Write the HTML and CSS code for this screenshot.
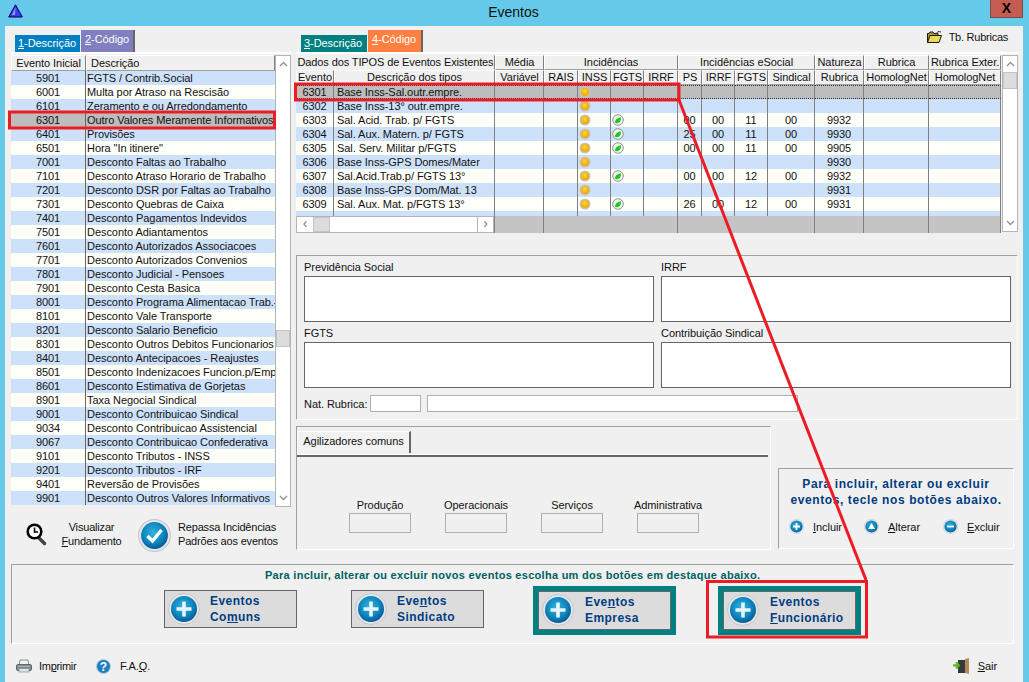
FILE: index.html
```html
<!DOCTYPE html>
<html lang="pt">
<head>
<meta charset="utf-8">
<title>Eventos</title>
<link rel="stylesheet" href="styles.css">
</head>
<body>
<svg class="defs" width="0" height="0" aria-hidden="true">
  <defs>
    <radialGradient id="gBlue" cx="45%" cy="40%" r="65%">
      <stop offset="0" stop-color="#35b4dc"/><stop offset=".6" stop-color="#0d86bf"/><stop offset="1" stop-color="#07518e"/>
    </radialGradient>
    <radialGradient id="gGold" cx="45%" cy="40%" r="60%">
      <stop offset="0" stop-color="#ffd83a"/><stop offset="1" stop-color="#eea400"/>
    </radialGradient>
    <symbol id="orb" viewBox="0 0 32 32">
      <circle cx="16" cy="16" r="15.5" fill="#e4e6e8" stroke="#c4c8cc"/>
      <circle cx="16" cy="16" r="13" fill="url(#gBlue)"/>
    </symbol>
    <symbol id="gold" viewBox="0 0 12 12">
      <circle cx="6" cy="6" r="5.5" fill="#c6c2b4"/>
      <circle cx="6" cy="6" r="4" fill="url(#gGold)"/>
    </symbol>
    <symbol id="green" viewBox="0 0 12 12">
      <circle cx="6" cy="6" r="5.3" fill="#f2f4f0" stroke="#8e968e"/>
      <path d="M2.800 8.500Q3.500 4 8.800 3.200 9.500 7.500 6 9 4 9.500 2.800 8.500z" fill="#1ec61e"/>
    </symbol>
    <symbol id="up" viewBox="0 0 9 6"><path d="M1 5l3.500-3.500L8 5" fill="none" stroke="#909090" stroke-width="1.300"/></symbol>
    <symbol id="down" viewBox="0 0 9 6"><path d="M1 1l3.500 3.500L8 1" fill="none" stroke="#909090" stroke-width="1.300"/></symbol>
  </defs>
</svg>

<header class="titlebar">
  <svg class="logo" width="15" height="14" viewBox="0 0 15 14"><path d="M7.500 .8L14.300 13H.7z" fill="#3a3ae8" stroke="#000048"/><path d="M7.500 3L4 11h3z" fill="#8a9cff"/></svg>
  <h1 class="title">Eventos</h1>
  <button class="close" type="button">X</button>
</header>

<div class="client">
  <div class="main">
    <section class="left">
      <div class="tabs tabs-left">
        <span class="tab tab-blue"><u>1</u>-Descrição</span>
        <span class="tab tab-purple active"><u>2</u>-Código</span>
      </div>
      <div class="strip"></div>
      <div class="list">
        <table class="grid list-table">
          <colgroup><col class="w-75"><col class="w-189"></colgroup>
          <thead><tr><th>Evento Inicial</th><th class="tl">Descrição</th></tr></thead>
          <tbody>
            <tr><td class="c">5901</td><td>FGTS / Contrib.Social</td></tr>
            <tr><td class="c">6001</td><td>Multa por Atraso na Rescisão</td></tr>
            <tr><td class="c">6101</td><td>Zeramento e ou Arredondamento</td></tr>
            <tr class="sel"><td class="c">6301</td><td>Outro Valores Meramente Informativos</td></tr>
            <tr><td class="c">6401</td><td>Provisões</td></tr>
            <tr><td class="c">6501</td><td>Hora "In itinere"</td></tr>
            <tr><td class="c">7001</td><td>Desconto Faltas ao Trabalho</td></tr>
            <tr><td class="c">7101</td><td>Desconto Atraso Horario de Trabalho</td></tr>
            <tr><td class="c">7201</td><td>Desconto DSR por Faltas ao Trabalho</td></tr>
            <tr><td class="c">7301</td><td>Desconto Quebras de Caixa</td></tr>
            <tr><td class="c">7401</td><td>Desconto Pagamentos Indevidos</td></tr>
            <tr><td class="c">7501</td><td>Desconto Adiantamentos</td></tr>
            <tr><td class="c">7601</td><td>Desconto Autorizados Associacoes</td></tr>
            <tr><td class="c">7701</td><td>Desconto Autorizados Convenios</td></tr>
            <tr><td class="c">7801</td><td>Desconto Judicial - Pensoes</td></tr>
            <tr><td class="c">7901</td><td>Desconto Cesta Basica</td></tr>
            <tr><td class="c">8001</td><td>Desconto Programa Alimentacao Trab.-</td></tr>
            <tr><td class="c">8101</td><td>Desconto Vale Transporte</td></tr>
            <tr><td class="c">8201</td><td>Desconto Salario Beneficio</td></tr>
            <tr><td class="c">8301</td><td>Desconto Outros Debitos Funcionarios</td></tr>
            <tr><td class="c">8401</td><td>Desconto Antecipacoes - Reajustes</td></tr>
            <tr><td class="c">8501</td><td>Desconto Indenizacoes Funcion.p/Empr</td></tr>
            <tr><td class="c">8601</td><td>Desconto Estimativa de Gorjetas</td></tr>
            <tr><td class="c">8901</td><td>Taxa Negocial Sindical</td></tr>
            <tr><td class="c">9001</td><td>Desconto Contribuicao Sindical</td></tr>
            <tr><td class="c">9034</td><td>Desconto Contribuicao Assistencial</td></tr>
            <tr><td class="c">9067</td><td>Desconto Contribuicao Confederativa</td></tr>
            <tr><td class="c">9101</td><td>Desconto Tributos - INSS</td></tr>
            <tr><td class="c">9201</td><td>Desconto Tributos - IRF</td></tr>
            <tr><td class="c">9401</td><td>Reversão de Provisões</td></tr>
            <tr><td class="c">9901</td><td>Desconto Outros Valores Informativos</td></tr>
          </tbody>
        </table>
        <div class="vscroll vscroll-left">
          <span class="sbtn"><svg width="9" height="6"><use href="#up"/></svg></span>
          <span class="thumb thumb-left"></span>
          <span class="sbtn sbtn-end"><svg width="9" height="6"><use href="#down"/></svg></span>
        </div>
      </div>
      <div class="tools">
        <svg class="lens" width="21" height="23" viewBox="0 0 21 23">
          <path d="M12.500 14.500l6 6" stroke="#444" stroke-width="3.500" stroke-linecap="round"/>
          <circle cx="8.500" cy="8.500" r="6.800" fill="#fff" stroke="#000" stroke-width="2.600"/>
          <path d="M8.500 4.500v4.500h3.500" fill="none" stroke="#000" stroke-width="1.600"/>
        </svg>
        <div class="tool-text tool-view">Visualizar<br><u>F</u>undamento</div>
        <svg class="orb-big" width="33" height="33"><use href="#orb"/><path d="M9.500 17l5 5 9-11" fill="none" stroke="#fff" stroke-width="3.400"/></svg>
        <div class="tool-text">Repassa Incidências<br>Padrões aos eventos</div>
      </div>
    </section>

    <section class="right">
      <div class="right-head">
        <div class="tabs">
          <span class="tab tab-teal"><u>3</u>-Descrição</span>
          <span class="tab tab-orange active"><u>4</u>-Código</span>
        </div>
        <div class="rubricas">
          <svg width="15" height="12" viewBox="0 0 15 12"><path d="M.5 11.500V2.500h1.500l1-1.500h3l1 1.500h4v2" fill="#a89838" stroke="#1a1a00"/><path d="M.5 11.500L3 4.500h11.500l-2.500 7z" fill="#e8d860" stroke="#1a1a00"/><path d="M9 3l2-2.500 3 .5" fill="none" stroke="#333"/></svg>
          <span>Tb. Rubricas</span>
        </div>
      </div>
      <div class="strip"></div>
      <div class="types">
        <table class="grid types-table">
          <colgroup>
            <col class="w-38"><col class="w-161"><col class="w-49"><col class="w-34"><col class="w-33"><col class="w-33"><col class="w-34"><col class="w-24"><col class="w-33"><col class="w-33"><col class="w-47"><col class="w-49"><col class="w-65"><col class="w-72">
          </colgroup>
          <thead>
            <tr>
              <th colspan="2" class="flat">Dados dos TIPOS de Eventos Existentes</th>
              <th>Média</th>
              <th colspan="4">Incidências</th>
              <th colspan="4">Incidências eSocial</th>
              <th>Natureza</th>
              <th>Rubrica</th>
              <th>Rubrica Exter.</th>
            </tr>
            <tr>
              <th>Evento</th><th>Descrição dos tipos</th><th>Variável</th>
              <th>RAIS</th><th>INSS</th><th>FGTS</th><th>IRRF</th>
              <th>PS</th><th>IRRF</th><th>FGTS</th><th>Sindical</th>
              <th>Rubrica</th><th>HomologNet</th><th>HomologNet</th>
            </tr>
          </thead>
          <tbody>
            <tr class="sel dotted"><td class="c">6301</td><td>Base Inss-Sal.outr.empre.</td><td></td><td></td><td class="dot"><svg width="12" height="12"><use href="#gold"/></svg></td><td></td><td></td><td></td><td></td><td></td><td></td><td></td><td></td><td></td></tr>
            <tr><td class="c">6302</td><td>Base Inss-13° outr.empre.</td><td></td><td></td><td class="dot"><svg width="12" height="12"><use href="#gold"/></svg></td><td></td><td></td><td></td><td></td><td></td><td></td><td></td><td></td><td></td></tr>
            <tr><td class="c">6303</td><td>Sal. Acid. Trab. p/ FGTS</td><td></td><td></td><td class="dot"><svg width="12" height="12"><use href="#gold"/></svg></td><td class="dot"><svg width="12" height="12"><use href="#green"/></svg></td><td></td><td class="c">00</td><td class="c">00</td><td class="c">11</td><td class="c">00</td><td class="c">9932</td><td></td><td></td></tr>
            <tr><td class="c">6304</td><td>Sal. Aux. Matern. p/ FGTS</td><td></td><td></td><td class="dot"><svg width="12" height="12"><use href="#gold"/></svg></td><td class="dot"><svg width="12" height="12"><use href="#green"/></svg></td><td></td><td class="c">25</td><td class="c">00</td><td class="c">11</td><td class="c">00</td><td class="c">9930</td><td></td><td></td></tr>
            <tr><td class="c">6305</td><td>Sal. Serv. Militar p/FGTS</td><td></td><td></td><td class="dot"><svg width="12" height="12"><use href="#gold"/></svg></td><td class="dot"><svg width="12" height="12"><use href="#green"/></svg></td><td></td><td class="c">00</td><td class="c">00</td><td class="c">11</td><td class="c">00</td><td class="c">9905</td><td></td><td></td></tr>
            <tr><td class="c">6306</td><td>Base Inss-GPS Domes/Mater</td><td></td><td></td><td class="dot"><svg width="12" height="12"><use href="#gold"/></svg></td><td></td><td></td><td></td><td></td><td></td><td></td><td class="c">9930</td><td></td><td></td></tr>
            <tr><td class="c">6307</td><td>Sal.Acid.Trab.p/ FGTS 13°</td><td></td><td></td><td class="dot"><svg width="12" height="12"><use href="#gold"/></svg></td><td class="dot"><svg width="12" height="12"><use href="#green"/></svg></td><td></td><td class="c">00</td><td class="c">00</td><td class="c">12</td><td class="c">00</td><td class="c">9932</td><td></td><td></td></tr>
            <tr><td class="c">6308</td><td>Base Inss-GPS Dom/Mat. 13</td><td></td><td></td><td class="dot"><svg width="12" height="12"><use href="#gold"/></svg></td><td></td><td></td><td></td><td></td><td></td><td></td><td class="c">9931</td><td></td><td></td></tr>
            <tr><td class="c">6309</td><td>Sal. Aux. Mat. p/FGTS 13°</td><td></td><td></td><td class="dot"><svg width="12" height="12"><use href="#gold"/></svg></td><td class="dot"><svg width="12" height="12"><use href="#green"/></svg></td><td></td><td class="c">26</td><td class="c">00</td><td class="c">12</td><td class="c">00</td><td class="c">9931</td><td></td><td></td></tr>
            <tr class="partial"><td></td><td></td><td></td><td></td><td></td><td></td><td></td><td></td><td></td><td></td><td></td><td></td><td></td><td></td></tr>
          </tbody>
          <tfoot>
            <tr>
              <td colspan="2" class="hscroll-cell">
                <div class="hscroll">
                  <span class="hbtn">&#8249;</span><span class="hthumb"></span><span class="hfill"></span><span class="hbtn hbtn-end">&#8250;</span>
                </div>
              </td>
              <td></td><td colspan="4"></td><td colspan="4"></td><td></td><td></td><td></td>
            </tr>
          </tfoot>
        </table>
        <div class="vscroll vscroll-right">
          <span class="sbtn"><svg width="9" height="6"><use href="#up"/></svg></span>
          <span class="thumb"></span>
          <span class="sbtn sbtn-end"><svg width="9" height="6"><use href="#down"/></svg></span>
        </div>
      </div>

      <div class="group">
        <div class="fields">
          <div><div class="flabel">Previdência Social</div><div class="fbox"></div></div>
          <div><div class="flabel">IRRF</div><div class="fbox"></div></div>
          <div><div class="flabel">FGTS</div><div class="fbox"></div></div>
          <div><div class="flabel">Contribuição Sindical</div><div class="fbox"></div></div>
        </div>
        <div class="nat">
          <span class="nat-label">Nat. Rubrica:</span>
          <span class="input input-code"></span>
          <span class="input input-desc"></span>
        </div>
      </div>

      <div class="lower">
        <div class="agil">
          <div class="agil-tabs"><span class="agil-tab">Agilizadores comuns</span></div>
          <div class="agil-grid">
            <div class="agil-item"><span class="agil-label">Produção</span><span class="agil-box"></span></div>
            <div class="agil-item"><span class="agil-label">Operacionais</span><span class="agil-box"></span></div>
            <div class="agil-item"><span class="agil-label">Serviços</span><span class="agil-box"></span></div>
            <div class="agil-item"><span class="agil-label">Administrativa</span><span class="agil-box"></span></div>
          </div>
        </div>
        <div class="hint">
          <p class="hint-text">Para incluir, alterar ou excluir<br>eventos, tecle nos botões abaixo.</p>
          <div class="hint-actions">
            <span class="act act-inc"><svg width="15" height="15"><use href="#orb"/><path d="M7.500 4v7M4 7.500h7" stroke="#fff" stroke-width="1.800"/></svg><span><u>I</u>ncluir</span></span>
            <span class="act act-alt"><svg width="15" height="15"><use href="#orb"/><path d="M7.500 4l3.500 6H4z" fill="#fff"/></svg><span><u>A</u>lterar</span></span>
            <span class="act"><svg width="15" height="15"><use href="#orb"/><path d="M4 7.500h7" stroke="#fff" stroke-width="1.800"/></svg><span><u>E</u>xcluir</span></span>
          </div>
        </div>
      </div>
    </section>
  </div>

  <section class="panel">
    <p class="panel-text">Para incluir, alterar ou excluir novos eventos escolha um dos botões em destaque abaixo.</p>
    <div class="ev-row">
      <button class="ev ev-1" type="button"><svg width="32" height="32"><use href="#orb"/><path d="M16 8.500v15M8.500 16h15" stroke="#e8f6fb" stroke-width="3.600"/></svg><span>Eventos<br>Co<u>m</u>uns</span></button>
      <button class="ev ev-2" type="button"><svg width="32" height="32"><use href="#orb"/><path d="M16 8.500v15M8.500 16h15" stroke="#e8f6fb" stroke-width="3.600"/></svg><span>Eve<u>n</u>tos<br>Sindicato</span></button>
      <div class="hl hl-1"><button class="ev" type="button"><svg width="32" height="32"><use href="#orb"/><path d="M16 8.500v15M8.500 16h15" stroke="#e8f6fb" stroke-width="3.600"/></svg><span>Eve<u>n</u>tos<br>Empresa</span></button></div>
      <div class="hl hl-2"><button class="ev" type="button"><svg width="32" height="32"><use href="#orb"/><path d="M16 8.500v15M8.500 16h15" stroke="#e8f6fb" stroke-width="3.600"/></svg><span>Eventos<br><u>F</u>uncionário</span></button></div>
    </div>
  </section>

  <footer class="footer">
    <span class="foot-item foot-print">
      <svg width="16" height="14" viewBox="0 0 16 14"><path d="M4 1h8l1 5H3z" fill="#eef0f0" stroke="#8a9096"/><rect x=".5" y="5.500" width="15" height="6" rx="1.500" fill="#7f8a90" stroke="#5e666c"/><rect x="3" y="9.500" width="10" height="3.500" fill="#dfe3e4" stroke="#7a8288" stroke-width=".6"/><rect x="2" y="6.800" width="12" height="1" fill="#a9b4b8"/></svg>
      <span class="print-label">Im<u>p</u>rimir</span>
    </span>
    <span class="foot-item foot-faq">
      <svg width="15" height="15" viewBox="0 0 15 15"><circle cx="7.500" cy="7.500" r="7" fill="#1d7fc0" stroke="#b7d3e2"/><text class="q" x="7.500" y="11.500" text-anchor="middle">?</text></svg>
      <span>F.A.<u>Q</u>.</span>
    </span>
    <span class="foot-item foot-exit">
      <svg width="17" height="16" viewBox="0 0 17 16"><rect x="5" y="2" width="9" height="13" fill="#333b3b"/><path d="M12 1l4-1v16l-4-1z" fill="#b48a58"/><path d="M0 8h3V5.500h3v2.500h1.500v2.500H6V13H3v-2.500H0z" transform="translate(0 -1) scale(.9)" fill="#66b832"/></svg>
      <span><u>S</u>air</span>
    </span>
  </footer>
</div>

<svg class="marks" width="1029" height="682" viewBox="0 0 1029 682" aria-hidden="true">
  <g fill="none" stroke="#ed1c24" stroke-width="3">
    <rect x="9.500" y="112" width="265" height="16"/>
    <rect x="295.500" y="84" width="383.500" height="16"/>
    <rect x="707.500" y="581.500" width="159" height="55.500"/>
    <path d="M679 100L866 580" stroke-width="3"/>
  </g>
</svg>
</body>
</html>
```

FILE: styles.css
```css
* { box-sizing: border-box; }
html, body { margin: 0; padding: 0; }
body {
  position: relative;
  width: 1029px;
  height: 682px;
  overflow: hidden;
  background: #65c9ea;
  font: 11px/14px "Liberation Sans", Arial, sans-serif;
  letter-spacing: -.06px;
  color: #111;
}
.defs { position: absolute; }
u { text-decoration: underline; }
p, h1 { margin: 0; font-weight: normal; }

/* title bar */
.titlebar { display: flex; align-items: flex-start; height: 26px; position: relative; }
.logo { margin: 4px 0 0 8px; }
.title { flex: 1; text-align: center; font-size: 14px; line-height: 24px; letter-spacing: 0; padding-left: 14px; }
.close {
  width: 33px; height: 18px; margin-right: 6px; padding: 0;
  background: #c45c52; border: 1px solid #7a4a44; border-top: 0;
  font: bold 14px/15px "Liberation Sans", sans-serif; color: #000;
}

/* client */
.client { margin: 0 6px 0 5px; height: 656px; background: #f0f0f0; }
.main { display: flex; height: 538px; padding: 4px 0 0 6px; gap: 5px; }
.left { width: 280px; }
.right { width: 722px; }

/* tabs */
.tabs { display: flex; align-items: flex-end; height: 22px; padding-left: 5px; gap: 1px; }
.tabs-left { padding-left: 4px; }
.tab { color: #fff; height: 17px; line-height: 17px; padding: 0 3px; white-space: nowrap; }
.tab.active { height: 22px; line-height: 19px; padding: 0 4px 3px; border-right: 2px solid #666; }
.tab-blue { background: #0080c0; width: 65px; }
.tab-purple { background: #8080c0; width: 54px; }
.tab-teal { background: #008080; width: 66px; }
.tab-orange { background: #ff8040; width: 55px; }
.strip { height: 3px; border-top: 2px solid #fff; margin-bottom: 0; }

/* grids */
.grid { table-layout: fixed; border-collapse: separate; border-spacing: 0; }
.grid th {
  height: 14px; padding: 0; font-weight: normal; line-height: 13px; white-space: nowrap; overflow: hidden;
  background: #f0f0f0; border: 1px solid #fff; border-right-color: #808080; border-bottom-color: #a0a0a0;
  border-left-width: 1px;
}
.grid td {
  height: 14px; padding: 0 0 0 3px; line-height: 14px; white-space: nowrap; overflow: hidden;
  border-right: 1px solid #808080;
}
.grid tbody tr:nth-child(odd) td { background: #cde1fb; }
.grid tbody tr:nth-child(even) td { background: #fffffa; }
.types-table tbody tr:nth-child(odd) td { background: #fffffa; }
.types-table tbody tr:nth-child(even) td { background: #cde1fb; }
.grid tbody tr.sel td { background: #bdbdbd; }
.grid td.c { text-align: center; padding: 0; }
.tl { text-align: left; padding-left: 4px !important; }

.w-75 { width: 75px; } .w-189 { width: 189px; }
.w-38 { width: 38px; } .w-161 { width: 161px; } .w-49 { width: 49px; } .w-34 { width: 34px; }
.w-33 { width: 33px; } .w-24 { width: 24px; } .w-47 { width: 47px; } .w-65 { width: 65px; } .w-72 { width: 72px; }

/* left list */
.list { display: flex; align-items: flex-start; height: 452px; }
.list-table { width: 264px; }
.list-table th { height: 16px; }
.list-table td:first-child { border-right: 1px solid #666; }
.list-table td:last-child { border-right: 0; padding-left: 1px; }
.vscroll { display: flex; flex-direction: column; width: 16px; background: #fff; border: 1px solid #b4b4b4; }
.vscroll-left { height: 452px; }
.vscroll-right { height: 177px; margin-left: 1px; }
.sbtn { display: flex; align-items: center; justify-content: center; height: 16px; background: #fff; }
.sbtn-end { margin-top: auto; }
.thumb { height: 17px; background: #dcdcdc; border: 1px solid #c4c4c4; }
.thumb-left { margin-top: 258px; }

/* left tools */
.tools { display: flex; align-items: flex-start; padding: 12px 0 0 15px; }
.lens { margin-top: 4px; }
.tool-text { line-height: 14px; white-space: nowrap; margin-top: 1px; letter-spacing: -.18px; }
.tool-view { text-align: center; width: 73px; margin-left: 8px; }
.orb-big { margin: 0 7px 0 10px; }

/* right head */
.right-head { display: flex; justify-content: space-between; height: 22px; }
.rubricas { display: flex; align-items: flex-start; gap: 7px; padding: 0 10px 0 0; letter-spacing: -.25px; }
.rubricas svg { margin-top: 1px; }
.rubricas span { line-height: 14px; }

/* types grid */
.types { display: flex; align-items: flex-start; height: 177px; }
.types-table { width: 705px; }
.types-table th { height: 14px; }
.types-table th.flat { border-color: transparent; border-right-color: #808080; letter-spacing: -.12px; }
.dotted td { border-top: 1px dotted #333; border-bottom: 1px dotted #333; line-height: 12px; }
.grid td.dot { padding: 0 0 0 1px; line-height: 0; }
.dot svg { display: block; }
.partial td { height: 5px; line-height: 0; font-size: 0; }
.types-table tfoot td { height: 17px; background: #c4c4c4; padding: 0; }
.hscroll { display: flex; height: 17px; background: #fff; border: 1px solid #b4b4b4; }
.hbtn { width: 16px; text-align: center; color: #777; font-size: 14px; line-height: 13px; }
.hbtn-end { border-left: 1px solid #b4b4b4; }
.hthumb { width: 17px; background: #dcdcdc; border: 1px solid #c4c4c4; }
.hfill { flex: 1; }

/* notes group */
.group {
  margin-top: 23px; height: 165px; padding: 5px 7px 0;
  border: 1px solid #fff; border-top-color: #a0a0a0; border-left-color: #a0a0a0;
}
.fields { display: grid; grid-template-columns: 350px 350px; column-gap: 7px; row-gap: 5px; }
.flabel { height: 15px; line-height: 12px; }
.fbox { height: 46px; background: #fff; border: 1px solid #666; }
.nat { display: flex; align-items: center; margin-top: 7px; }
.nat-label { width: 66px; }
.input { height: 17px; background: #fff; border: 1px solid #b0b0b0; }
.input-code { width: 51px; margin-right: 6px; }
.input-desc { width: 371px; }

/* lower */
.lower { display: flex; margin-top: 6px; }
.agil {
  width: 475px; height: 124px; padding-top: 4px;
  border: 1px solid #fff; border-top-color: #a0a0a0; border-left-color: #a0a0a0;
}
.agil-tabs { height: 26px; width: 471px; border-bottom: 2px solid #666; box-shadow: inset 0 -1px 0 #fff; }
.agil-tab {
  display: block; width: 114px; height: 22px; line-height: 19px; text-align: center;
  background: #f2f2f2; border-top: 1px solid #fff; border-left: 1px solid #fff; border-right: 2px solid #666;
}
.agil-grid { display: flex; gap: 34px; padding: 40px 0 0 52px; }
.agil-item { display: flex; flex-direction: column; align-items: center; width: 62px; }
.agil-label { line-height: 16px; white-space: nowrap; }
.agil-box { width: 62px; height: 20px; border: 1px solid #b0b0b0; }

.hint {
  width: 236px; height: 81px; margin: 42px 0 0 7px; padding-top: 7px;
  border: 1px solid #fff; border-top-color: #a0a0a0; border-left-color: #a0a0a0;
}
.hint-text { text-align: center; font: bold 12px/16px "Liberation Sans", sans-serif; letter-spacing: .6px; color: #003c80; }
.hint-actions { display: flex; padding: 11px 0 0 10px; }
.act { display: flex; align-items: center; gap: 9px; }
.act-inc { width: 75px; }
.act-alt { width: 79px; }

/* bottom panel */
.panel {
  height: 80px; margin: 0 0 0 6px; width: 1003px;
  border: 1px solid #fff; border-top: 1px solid #a0a0a0; border-left-color: #a0a0a0;
}
.panel-text { padding: 3px 0 0 253px; font: bold 11px/14px "Liberation Sans", sans-serif; letter-spacing: .28px; color: #006060; }
.ev-row { display: flex; align-items: flex-start; padding-left: 152px; }
.ev {
  display: flex; align-items: center; width: 133px; height: 38px; margin-top: 8px; padding: 0 0 0 3px;
  background: #dcdcdc; border: 1px solid #666; text-align: left;
  font: bold 12px/16px "Liberation Sans", sans-serif; letter-spacing: .45px; color: #003c80;
}
.ev span { margin-left: 10px; }
.ev-1 { margin-right: 54px; }
.ev-2 { margin-right: 49px; }
.hl { width: 143px; height: 49px; margin-top: 4px; background: #008080; padding: 5px; }
.hl .ev { margin-top: 0; height: 39px; padding-bottom: 2px; }
.hl .ev span { margin-left: 11px; }
.hl-1 { margin-right: 42px; }

/* footer */
.footer { display: flex; align-items: center; height: 38px; padding: 6px 0 0 11px; }
.foot-item { display: flex; align-items: center; }
.foot-print { gap: 7px; width: 80px; }
.print-label { letter-spacing: -.3px; }
.foot-faq { gap: 9px; }
.foot-exit { margin-left: auto; margin-right: 26px; gap: 8px; }
.q { font: bold 12px "Liberation Sans", sans-serif; fill: #fff; }

/* annotation overlay */
.marks { position: absolute; left: 0; top: 0; pointer-events: none; }
```
